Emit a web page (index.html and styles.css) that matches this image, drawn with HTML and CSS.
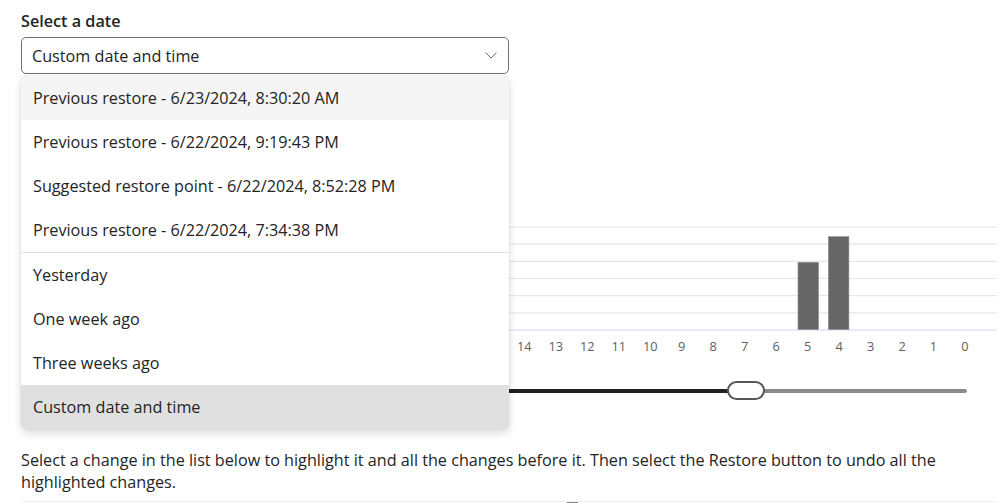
FILE: index.html
```html
<!DOCTYPE html>
<html lang="en">
<head>
<meta charset="utf-8">
<title>Select a date</title>
<link rel="stylesheet" href="styles.css">
</head>
<body>
<div class="page">
  <div class="field">
    <div class="label">Select a date</div>
    <div class="select">
      <span class="value">Custom date and time</span>
      <svg class="chevron" width="12" height="7" viewBox="0 0 12 7"><polyline points="0.5,0.5 6,6 11.5,0.5" fill="none" stroke="#707070" stroke-width="1"/></svg>
    </div>
    <div class="menu" role="listbox">
      <div class="opt hover">Previous restore - 6/23/2024, 8:30:20 AM</div>
      <div class="opt">Previous restore - 6/22/2024, 9:19:43 PM</div>
      <div class="opt">Suggested restore point - 6/22/2024, 8:52:28 PM</div>
      <div class="opt">Previous restore - 6/22/2024, 7:34:38 PM</div>
      <div class="divider"></div>
      <div class="opt">Yesterday</div>
      <div class="opt">One week ago</div>
      <div class="opt">Three weeks ago</div>
      <div class="opt selected">Custom date and time</div>
    </div>
  </div>

  <svg class="chart" width="976" height="140" viewBox="0 0 976 140">
    <g stroke="#e6e6e6" stroke-width="1.2">
      <line x1="0" y1="7" x2="976" y2="7"/>
      <line x1="0" y1="24.2" x2="976" y2="24.2"/>
      <line x1="0" y1="41.4" x2="976" y2="41.4"/>
      <line x1="0" y1="58.5" x2="976" y2="58.5"/>
      <line x1="0" y1="75.7" x2="976" y2="75.7"/>
      <line x1="0" y1="92.8" x2="976" y2="92.8"/>
    </g>
    <line x1="0" y1="110" x2="976" y2="110" stroke="#cdd7ef" stroke-width="1.2"/>
    <rect x="777" y="42.3" width="20.5" height="67.2" fill="#666666" stroke="#8c8c8c" stroke-width="0.6"/>
    <rect x="807.4" y="16.7" width="20.5" height="92.8" fill="#666666" stroke="#8c8c8c" stroke-width="0.6"/>
    <g class="ticks" text-anchor="middle">
      <text x="503.3" y="131">14</text>
      <text x="534.8" y="131">13</text>
      <text x="566.3" y="131">12</text>
      <text x="597.7" y="131">11</text>
      <text x="629.2" y="131">10</text>
      <text x="660.7" y="131">9</text>
      <text x="692.2" y="131">8</text>
      <text x="723.7" y="131">7</text>
      <text x="755.1" y="131">6</text>
      <text x="786.6" y="131">5</text>
      <text x="818.1" y="131">4</text>
      <text x="849.6" y="131">3</text>
      <text x="881.1" y="131">2</text>
      <text x="912.5" y="131">1</text>
      <text x="944" y="131">0</text>
    </g>
  </svg>

  <div class="slider">
    <div class="track"><div class="fill" style="width:712px"></div></div>
    <div class="thumb" style="left:706px"></div>
  </div>

  <p class="desc">Select a change in the list below to highlight it and all the changes before it. Then select the Restore button to undo all the highlighted changes.</p>

  <div class="list"><span class="grip"></span></div>
</div>
</body>
</html>
```

FILE: styles.css
```css
* { box-sizing: border-box; }

html, body {
  margin: 0;
  padding: 0;
  background: #ffffff;
}

body {
  font-family: "Open Sans", "Noto Sans", sans-serif;
  color: #242424;
  overflow: hidden;
}

.page {
  padding: 10px 0 0 21px;
  width: 999px;
}

.field {
  position: relative;
  width: 488px;
}

.label {
  font-size: 16.2px;
  font-weight: 600;
  line-height: 22px;
  height: 22px;
  margin-bottom: 5px;
}

.select {
  height: 37px;
  border: 1px solid #707070;
  border-radius: 5px;
  display: flex;
  align-items: center;
  justify-content: space-between;
  padding: 0 11px 0 10px;
  font-size: 16.2px;
  line-height: 22px;
}

.chevron {
  display: block;
}

.menu {
  position: absolute;
  left: 0;
  top: 66px;
  width: 488px;
  background: #ffffff;
  border-radius: 5px;
  box-shadow: 0 0 2px rgba(0, 0, 0, 0.12), 0 4px 9px rgba(0, 0, 0, 0.14);
  overflow: hidden;
  z-index: 10;
}

.opt {
  height: 44px;
  display: flex;
  align-items: center;
  padding-left: 12px;
  font-size: 16.2px;
  line-height: 22px;
  color: #242424;
}

.opt.hover { background: #f5f5f5; }
.opt.selected { background: #e0e0e0; }

.divider {
  height: 1px;
  background: #e0e0e0;
}

.chart {
  display: block;
  margin-top: 146px;
}

.ticks {
  font-family: "Open Sans", "Noto Sans", sans-serif;
  font-size: 12.8px;
  fill: #616161;
}

.slider {
  position: relative;
  width: 946px;
  height: 19px;
  margin-top: 21px;
  display: flex;
  align-items: center;
}

.track {
  width: 100%;
  height: 4px;
  border-radius: 2px;
  background: #8a8a8a;
}

.fill {
  height: 4px;
  border-radius: 2px 0 0 2px;
  background: #1f1f1f;
}

.thumb {
  position: absolute;
  top: 0;
  width: 38px;
  height: 19px;
  border: 2px solid #575757;
  border-radius: 10px;
  background: #ffffff;
}

.desc {
  margin: 49px 0 0 0;
  font-size: 16.2px;
  line-height: 22px;
  color: #242424;
  max-width: 976px;
}

.list {
  margin-top: 8px;
  width: 976px;
  height: 4px;
  border-top: 1px solid #f0f0f0;
  position: relative;
}

.grip {
  display: block;
  margin-left: 546px;
  width: 11px;
  height: 2px;
  background: #8a8a8a;
}
```
